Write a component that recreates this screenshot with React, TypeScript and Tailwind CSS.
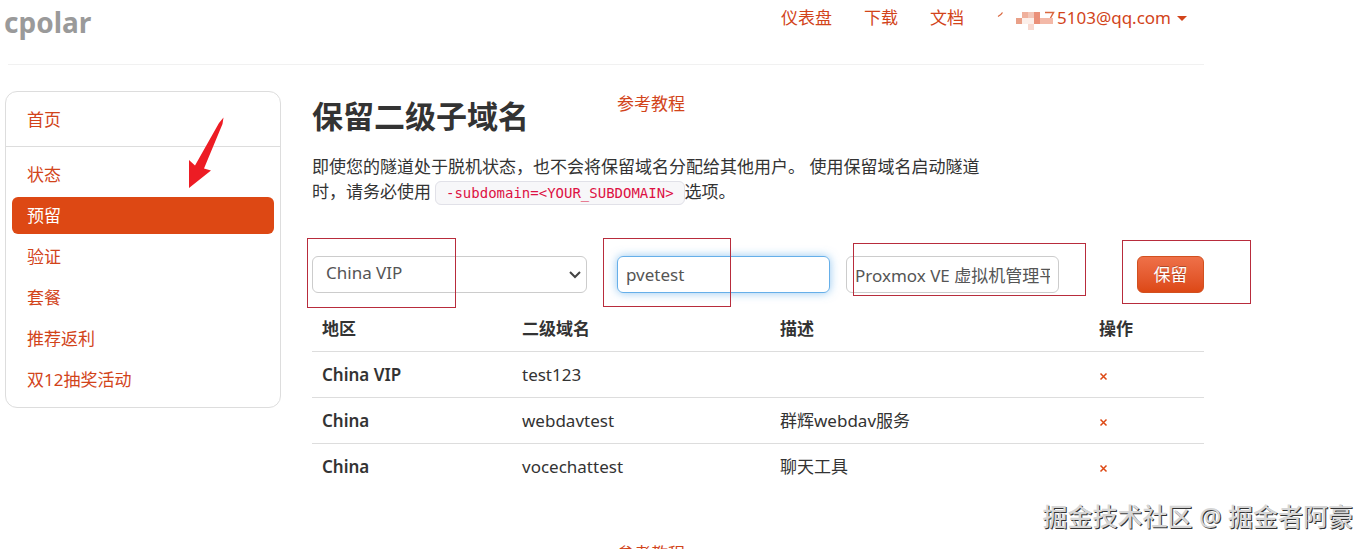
import React from "react";

const links = ["状态", "预留", "验证", "套餐", "推荐返利", "双12抽奖活动"];

const rows = [
  { region: "China VIP", name: "test123", note: "" },
  { region: "China", name: "webdavtest", note: "群辉webdav服务" },
  { region: "China", name: "vocechattest", note: "聊天工具" },
];

const linkColor = "text-[#d2441a]";

function Header() {
  return (
    <header className="ml-[3px] flex h-[65px] items-start justify-between border-b border-[#f1f1f1] pr-[17px]">
      <a href="#" className="-ml-1 pt-1 text-[28px] leading-9 font-bold text-[#9a9a9a]">
        cpolar
      </a>
      <nav className={`flex items-center gap-8 pt-1.5 leading-6 ${linkColor}`}>
        <a href="#">仪表盘</a>
        <a href="#">下载</a>
        <a href="#">文档</a>
        <button type="button" className="flex items-center">
          <svg className="h-6 w-[61px] shrink-0" viewBox="0 0 61 24" aria-hidden="true">
            <path d="M2 10.500Q5 9 6.500 6.500" fill="none" stroke="#d9673f" strokeWidth="1.300" />
            <path d="M26 12h12v6H26z" fill="#fcefea" />
            <path d="M26 6h6v6h-6z" fill="#efb09c" />
            <path d="M32 6h6v6h-6z" fill="#f3c6b8" />
            <path d="M20 12h6v6h-6z" fill="#e9a088" />
            <path d="M38 6h6v12h-6z" fill="#ea9079" />
            <path d="M44 12h13v6H44z" fill="#f3b9a8" />
            <path d="M32 18h6v6h-6z" fill="#f8d9d0" />
            <path d="M49 6.500h8.500L54.500 12" fill="none" stroke="#d9673f" strokeWidth="1.500" />
          </svg>
          5103@qq.com
          <svg className="ml-1.5 h-[5px] w-[10px]" viewBox="0 0 10 5" aria-hidden="true">
            <path d="M0 0h10L5 5z" fill="#d2441a" />
          </svg>
        </button>
      </nav>
    </header>
  );
}

function Sidebar() {
  return (
    <aside className="relative w-[276px] shrink-0 self-start rounded-xl border border-[#dddddd] pb-[9px]">
      <a href="#" className={`block border-b border-[#dddddd] px-[21px] pt-[15px] pb-[14px] leading-[25px] ${linkColor}`}>
        首页
      </a>
      <ul className="flex flex-col gap-1 px-1.5 pt-[9px]">
        {links.map((label) => (
          <li key={label}>
            <a
              href="#"
              className={
                label === "预留"
                  ? "block rounded-md bg-[#dd4814] px-[15px] py-1.5 leading-[25px] text-white"
                  : "block rounded-md px-[15px] py-1.5 leading-[25px] text-[#d2441a]"
              }
            >
              {label}
            </a>
          </li>
        ))}
      </ul>
      <svg className="absolute top-[25px] left-[182px] h-[72px] w-9" viewBox="0 0 36 72" aria-hidden="true">
        <path d="M35.500 0.500L34.500 7L16 51.500L23 53.500L1 71L1 43L7 48.500L31 6z" fill="#ed1c24" />
      </svg>
    </aside>
  );
}

function ReserveForm() {
  return (
    <form className="flex items-center" onSubmit={(e) => e.preventDefault()}>
      <div className="relative w-[275px]">
        <select
          aria-label="地区"
          className="h-[37px] w-full appearance-none rounded-md border border-[#cccccc] bg-white px-[13px] pb-[3px] text-[#555555]"
        >
          <option>China VIP</option>
          <option>China</option>
        </select>
        <svg className="pointer-events-none absolute top-[15px] right-[6px] h-2 w-3" viewBox="0 0 12 8" aria-hidden="true">
          <path d="M1 1l5 5 5-5" fill="none" stroke="#444" strokeWidth="2" />
        </svg>
        <span className="pointer-events-none absolute -top-[18px] -left-[5px] h-[70px] w-[149px] border border-[#b82c3c]" />
      </div>
      <div className="relative ml-[30px] w-[213px]">
        <input
          aria-label="二级域名"
          defaultValue="pvetest"
          className="h-[37px] w-full rounded-md border border-[#66afe9] px-2 text-[#555555] shadow-[0_0_10px_rgba(102,175,233,0.7)] outline-none"
        />
        <span className="pointer-events-none absolute -top-[18px] -left-[14px] h-[69px] w-[128px] border border-[#b82c3c]" />
      </div>
      <div className="relative ml-4 w-[213px]">
        <input
          aria-label="描述"
          defaultValue="Proxmox VE 虚拟机管理平台"
          className="h-[37px] w-full rounded-md border border-[#cccccc] px-2 text-[#555555] outline-none"
        />
        <span className="pointer-events-none absolute -top-[13px] left-[7px] h-[53px] w-[233px] border border-[#b82c3c]" />
      </div>
      <div className="relative ml-auto">
        <button
          type="submit"
          className="h-[37px] w-[67px] rounded-md border border-[#d2501f] bg-linear-to-b from-[#ee7048] to-[#dd4814] text-white [text-shadow:0_-1px_0_rgba(0,0,0,0.25)]"
        >
          保留
        </button>
        <span className="pointer-events-none absolute -top-4 -left-[15px] h-[64px] w-[129px] border border-[#b82c3c]" />
      </div>
    </form>
  );
}

function DomainTable() {
  return (
    <table className="mt-[13px] w-full table-fixed border-collapse text-left leading-[25px]">
      <colgroup>
        <col className="w-[200px]" />
        <col className="w-[258px]" />
        <col />
        <col className="w-[115px]" />
      </colgroup>
      <thead>
        <tr className="font-bold">
          <th className="px-[10px] py-2.5">地区</th>
          <th className="px-[10px]">二级域名</th>
          <th className="px-[10px]">描述</th>
          <th className="px-[10px]">操作</th>
        </tr>
      </thead>
      <tbody>
        {rows.map((row) => (
          <tr key={row.name} className="border-t border-[#dddddd]">
            <th scope="row" className="px-[10px] py-2.5 font-semibold">{row.region}</th>
            <td className="px-[10px]">{row.name}</td>
            <td className="px-[10px]">{row.note}</td>
            <td className="px-[10px]">
              <button type="button" aria-label="删除" className="flex h-[25px] items-center pt-[3px]">
                <svg className="h-[9px] w-[9px]" viewBox="0 0 9 9" aria-hidden="true">
                  <path d="M1.500 1.500l6 6M7.500 1.500l-6 6" stroke="#dd4814" strokeWidth="1.500" />
                </svg>
              </button>
            </td>
          </tr>
        ))}
      </tbody>
    </table>
  );
}

export default function App() {
  return (
    <div className="relative h-screen overflow-hidden bg-white font-['Noto_Sans','Noto_Sans_CJK_SC',sans-serif] text-[17px] text-[#333333]">
      <div className="ml-[5px] max-w-[1199px]">
        <Header />
        <div className="mt-[26px] flex gap-[31px]">
          <Sidebar />
          <main className="min-w-0 flex-1">
            <div className="flex">
              <h1 className="w-[305px] pt-1 text-[31px] leading-[42px] font-bold">保留二级子域名</h1>
              <a href="#" className={`leading-[25px] ${linkColor}`}>参考教程</a>
            </div>
            <p className="mt-[17px] max-w-[690px] leading-[25px]">
              即使您的隧道处于脱机状态，也不会将保留域名分配给其他用户。 使用保留域名启动隧道时，请务必使用
              <code className="ml-1 rounded-md border border-[#e1e1e8] bg-[#f7f7f9] px-[10px] py-[3px] font-['DejaVu_Sans_Mono',monospace] text-[14px] text-[#dd1144]">
                -subdomain=&lt;YOUR_SUBDOMAIN&gt;
              </code>
              选项。
            </p>
            <div className="mt-[50px]">
              <ReserveForm />
            </div>
            <DomainTable />
            <a href="#" className={`mt-[52px] ml-[305px] block leading-[25px] ${linkColor}`}>参考教程</a>
          </main>
        </div>
      </div>
      <div className="absolute right-[18px] bottom-[15px] text-[25px] leading-9 font-medium text-[#d6d6d6] [text-shadow:1px_1px_0_#333]">
        掘金技术社区 @ 掘金者阿豪
      </div>
    </div>
  );
}
